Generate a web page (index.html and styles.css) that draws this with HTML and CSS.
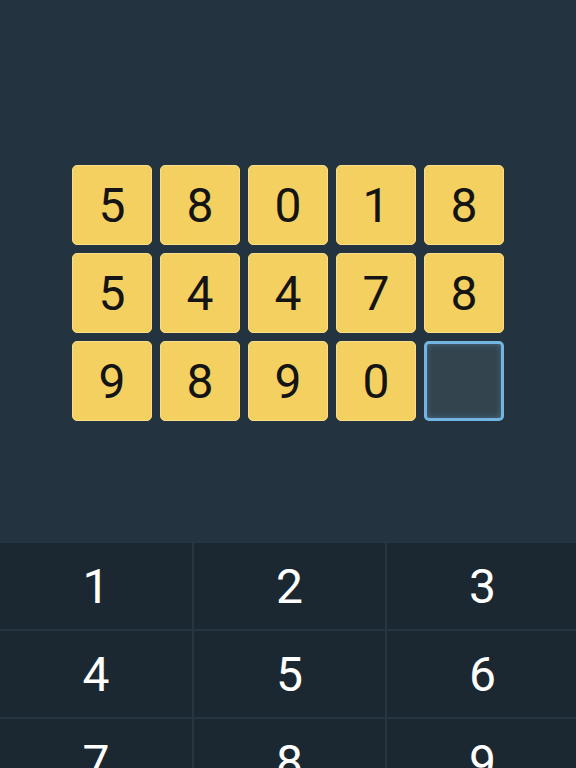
FILE: index.html
```html
<!DOCTYPE html>
<html lang="en">
<head>
  <meta charset="UTF-8">
  <title>Digits</title>
  <link rel="stylesheet" href="styles.css">
</head>
<body>
  <div class="app">
    <div class="board">
      <div class="grid">
        <div class="tile">5</div>
        <div class="tile">8</div>
        <div class="tile">0</div>
        <div class="tile">1</div>
        <div class="tile">8</div>
        <div class="tile">5</div>
        <div class="tile">4</div>
        <div class="tile">4</div>
        <div class="tile">7</div>
        <div class="tile">8</div>
        <div class="tile">9</div>
        <div class="tile">8</div>
        <div class="tile">9</div>
        <div class="tile">0</div>
        <div class="tile empty"></div>
      </div>
    </div>

    <div class="keypad">
      <button class="key">1</button>
      <button class="key">2</button>
      <button class="key">3</button>
      <button class="key">4</button>
      <button class="key">5</button>
      <button class="key">6</button>
      <button class="key">7</button>
      <button class="key">8</button>
      <button class="key">9</button>
    </div>
  </div>
</body>
</html>
```

FILE: styles.css
```css
html, body {
  margin: 0;
  padding: 0;
  height: 100%;
  overflow: hidden;
}

body {
  font-family: Roboto, "Liberation Sans", sans-serif;
  background: #233440;
}

.app {
  display: flex;
  flex-direction: column;
  height: 100vh;
}

.board {
  flex-shrink: 0;
  height: 541px;
  display: flex;
  justify-content: center;
  padding-top: 165px;
  box-sizing: border-box;
}

.grid {
  display: grid;
  grid-template-columns: repeat(5, 80px);
  grid-auto-rows: 80px;
  gap: 8px;
  align-self: flex-start;
}

.tile {
  background: #f3d060;
  border: 1px solid #f8de86;
  border-radius: 5px;
  box-sizing: border-box;
  display: flex;
  align-items: center;
  justify-content: center;
  font-size: 48px;
  color: #141414;
}

.tile.empty {
  background: #33444f;
  border: 3px solid #72b5e0;
  box-shadow: inset 0 0 6px rgba(114, 181, 224, 0.35);
}

.keypad {
  flex: 1;
  min-height: 0;
  overflow: hidden;
  display: grid;
  grid-template-columns: 192px 191px 191px;
  grid-auto-rows: 86px;
  background: #253541;
  gap: 2px;
  padding-top: 2px;
}

.key {
  background: #1b2831;
  border: none;
  margin: 0;
  padding: 0;
  font-family: Roboto, "Liberation Sans", sans-serif;
  font-size: 48px;
  color: #ffffff;
  display: flex;
  align-items: center;
  justify-content: center;
}
```
